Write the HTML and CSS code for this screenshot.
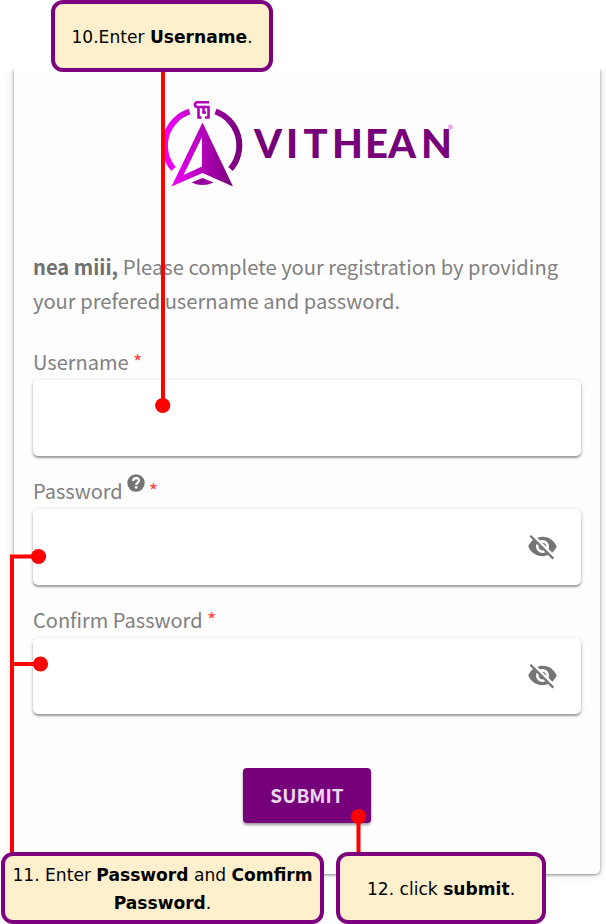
FILE: index.html
```html
<!DOCTYPE html>
<html lang="en">
<head>
<meta charset="utf-8">
<title>Vithean registration</title>
<link rel="stylesheet" href="styles.css">
</head>
<body>
<main class="page">
  <div class="viewport">
    <section class="card">
      <svg class="logo" width="300" height="96" viewBox="160 96 300 96" role="img" aria-label="Vithean">
        <defs>
          <linearGradient id="ring" gradientUnits="userSpaceOnUse" x1="163" y1="0" x2="242" y2="0">
            <stop offset="0" stop-color="#f500ff"/><stop offset=".5" stop-color="#ad00b5"/><stop offset="1" stop-color="#760079"/>
          </linearGradient>
          <linearGradient id="ship" gradientUnits="userSpaceOnUse" x1="171" y1="0" x2="233" y2="0">
            <stop offset="0" stop-color="#f000f8"/><stop offset=".5" stop-color="#b400bb"/><stop offset="1" stop-color="#78007b"/>
          </linearGradient>
        </defs>
        <g fill="none" stroke="url(#ring)" stroke-width="6">
          <path d="M189.500 111.500A36 36 0 0 0 173.500 169"/>
          <path d="M215.500 111.500A36 36 0 0 1 230.500 169"/>
        </g>
        <path fill="url(#ship)" fill-rule="evenodd" d="M202.500 122.500L233 186.500L202.500 173L171.500 186.500ZM202 137L183.500 175L202 166.500Z"/>
        <path fill="#9800a0" d="M191.500 182.500L202.500 178L213.500 182.500Q202.500 187.500 191.500 182.500Z"/>
        <path fill="none" stroke="#b000b8" stroke-width="2.600" d="M209 102.300H197.500C194.500 102.300 194 106.500 197 107H208.500V117.500H205M198.500 107V117.500H201.500M203.500 108V112.500H206"/>
        <text class="wordmark" y="157.800" x="254 286 303.500 332 365 388 421">VITHEAN</text>
        <circle cx="450.500" cy="127" r="2.300" fill="#e9a5ee" stroke="#f0c0f3"/>
      </svg>
      <p class="intro"><b>nea miii,</b> Please complete your registration by providing<br><span class="second">your prefered username and password.</span></p>
      <div class="field">
        <label class="label" for="user">Username <span class="req">*</span></label>
        <div class="box"><input id="user" class="input" type="text"></div>
      </div>
      <div class="field">
        <label class="label" for="pass">Password <svg class="help" width="18" height="18" viewBox="0 0 18 18"><circle cx="9" cy="9" r="8.700" fill="#757575"/><path d="M6.200 7C6.200 3 12 3.200 12 6.600C12 8.700 9.200 8.600 9.200 11" fill="none" stroke="#fff" stroke-width="2.300"/><circle cx="9.200" cy="13.400" r="1.300" fill="#fff"/></svg> <span class="req">*</span></label>
        <div class="box"><input id="pass" class="input" type="password">
          <svg class="eye" viewBox="0 0 24 24"><path d="M12 7c2.760 0 5 2.240 5 5 0 .650-.130 1.260-.360 1.830l2.920 2.920c1.510-1.260 2.700-2.890 3.430-4.750-1.730-4.390-6-7.500-11-7.500-1.400 0-2.740.250-3.980.700l2.160 2.160C10.740 7.130 11.350 7 12 7zM2 4.270l2.280 2.280.46.460C3.080 8.300 1.780 10.020 1 12c1.730 4.390 6 7.500 11 7.500 1.550 0 3.030-.3 4.380-.840l.42.420L19.730 22 21 20.730 3.270 3 2 4.270zM7.530 9.800l1.550 1.550c-.050.210-.080.430-.080.650 0 1.660 1.340 3 3 3 .220 0 .440-.030.650-.080l1.550 1.550c-.670.330-1.410.530-2.200.530-2.760 0-5-2.240-5-5 0-.790.200-1.530.530-2.200zm4.310-.780l3.150 3.150.020-.160c0-1.660-1.340-3-3-3l-.170.010z"/></svg>
        </div>
      </div>
      <div class="field">
        <label class="label" for="confirm">Confirm Password <span class="req">*</span></label>
        <div class="box"><input id="confirm" class="input" type="password">
          <svg class="eye" viewBox="0 0 24 24"><path d="M12 7c2.760 0 5 2.240 5 5 0 .650-.130 1.260-.360 1.830l2.920 2.920c1.510-1.260 2.700-2.890 3.430-4.750-1.730-4.390-6-7.500-11-7.500-1.400 0-2.740.250-3.980.700l2.160 2.160C10.740 7.130 11.350 7 12 7zM2 4.270l2.280 2.280.46.460C3.080 8.300 1.780 10.020 1 12c1.730 4.390 6 7.500 11 7.500 1.550 0 3.030-.3 4.380-.840l.42.420L19.730 22 21 20.730 3.270 3 2 4.270zM7.530 9.800l1.550 1.550c-.050.210-.080.430-.080.650 0 1.660 1.340 3 3 3 .220 0 .440-.030.650-.080l1.550 1.550c-.670.330-1.410.530-2.200.530-2.760 0-5-2.240-5-5 0-.790.200-1.530.530-2.200zm4.310-.780l3.150 3.150.020-.160c0-1.660-1.340-3-3-3l-.170.010z"/></svg>
        </div>
      </div>
      <button class="submit" type="button">SUBMIT</button>
    </section>
  </div>
  <svg class="connectors" width="606" height="924" viewBox="0 0 606 924">
    <path d="M163 70V405M38 556.500H12V855M12 664H40M358.500 817V855"/>
    <g class="dots"><circle cx="162.700" cy="405.500" r="7.600"/><circle cx="38.500" cy="556.500" r="7.600"/><circle cx="40.500" cy="664" r="7.600"/><circle cx="358.500" cy="816.500" r="7.600"/></g>
  </svg>
  <div class="callout callout-user"><span>10.Enter <b>Username</b>.</span></div>
  <div class="callout callout-pass"><span>11. Enter <b>Password</b> and <b>Comfirm<br>Password</b>.</span></div>
  <div class="callout callout-submit"><span>12. click <b>submit</b>.</span></div>
</main>
</body>
</html>
```
FILE: styles.css
```css
* { box-sizing: border-box; }
body { margin: 0; background: #fff; }
.page {
  position: relative;
  width: 606px;
  height: 924px;
  padding-top: 69px;
  overflow: hidden;
}
.viewport {
  width: 606px;
  height: 813px;
  padding: 0 6px 8px 14px;
  overflow: hidden;
}
.card {
  display: flex;
  flex-direction: column;
  width: 586px;
  height: 805px;
  padding: 27px 19px 0;
  background: #fefefe;
  border-radius: 0 0 5px 5px;
  box-shadow: 0 1px 3px rgba(0,0,0,.4), 0 0 10px rgba(0,0,0,.16);
  font-family: "Noto Sans CJK SC", "Noto Sans", sans-serif;
  color: #808080;
}
.logo { margin-left: 127px; flex: none; }
.wordmark {
  font: 900 40px Lato, sans-serif;
  fill: #760079;
}
.intro {
  margin: 58px 0 0;
  font-size: 20.150px;
  line-height: 34px;
  white-space: nowrap;
}
.intro b { color: #707070; }
.intro + .field { margin-top: 28px; }
.field { height: 129px; flex: none; }
.label {
  display: block;
  height: 34px;
  font-size: 20px;
  line-height: 31px;
  white-space: nowrap;
}
.req { color: #ff4545; }
.help { margin: -4px -1px 0 0; vertical-align: 7px; }
.box {
  display: flex;
  align-items: center;
  width: 548px;
  height: 76px;
  padding-right: 23px;
  border-radius: 5px;
  background: #fff;
  box-shadow: 0 2px 2px rgba(0,0,0,.32), 0 1px 5px rgba(0,0,0,.16);
}
.input {
  flex: 1;
  min-width: 0;
  height: 60px;
  border: 0;
  outline: 0;
  background: transparent;
}
.eye { width: 31px; height: 31px; fill: #757575; flex: none; margin-top: -2px; }
.submit {
  align-self: center;
  width: 128px;
  height: 55px;
  margin-top: 35px;
  padding: 0 0 3px;
  border: 0;
  border-radius: 4px;
  background: #760079;
  color: #eed8ef;
  font: 700 19px "Noto Sans CJK SC", sans-serif;
  box-shadow: 0 2px 3px rgba(0,0,0,.4);
}
.connectors { position: absolute; left: 0; top: 0; }
.connectors path { fill: none; stroke: #f00; stroke-width: 4; }
.dots { fill: #f00; }
.callout {
  position: absolute;
  display: flex;
  align-items: center;
  justify-content: center;
  padding-top: 2px;
  border: 4px solid #7d007f;
  border-radius: 12px;
  background: #fff0cd;
  color: #000;
  font: 17.100px/28px "DejaVu Sans", sans-serif;
  text-align: center;
  white-space: nowrap;
}
.callout-user { left: 51px; top: 0; width: 222px; height: 72px; }
.callout-pass { left: 1px; top: 852px; width: 323px; height: 72px; }
.callout-submit { left: 336px; top: 852px; width: 210px; height: 72px; }
```
